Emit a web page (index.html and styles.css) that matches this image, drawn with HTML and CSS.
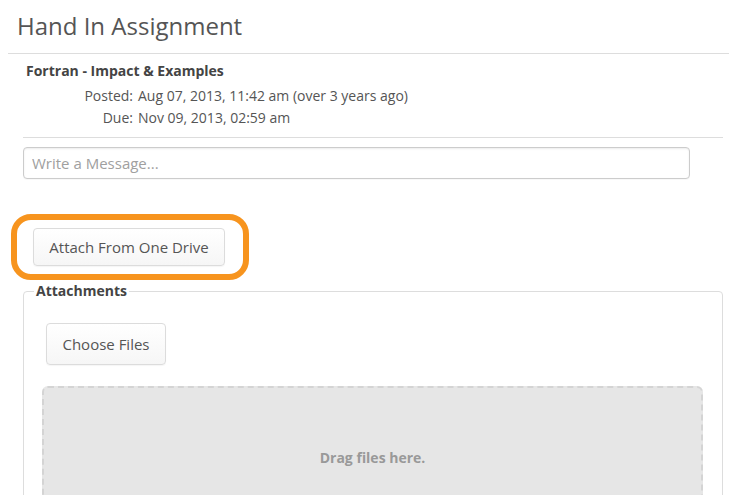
FILE: index.html
```html
<!DOCTYPE html>
<html lang="en">
<head>
<meta charset="utf-8">
<title>Hand In Assignment</title>
<link rel="stylesheet" href="styles.css">
</head>
<body>
<div class="page">
  <h1 class="page-title">Hand In Assignment</h1>
  <div class="info">
    <div class="info-title">Fortran - Impact &amp; Examples</div>
    <div class="info-grid">
      <div class="info-label">Posted:</div>
      <div class="info-value">Aug 07, 2013, 11:42 am (over 3 years ago)</div>
      <div class="info-label">Due:</div>
      <div class="info-value">Nov 09, 2013, 02:59 am</div>
    </div>
  </div>
  <input class="message" type="text" placeholder="Write a Message...">
  <div class="highlight">
    <button class="btn btn-attach" type="button">Attach From One Drive</button>
  </div>
  <fieldset class="attachments">
    <legend class="attachments-legend">Attachments</legend>
    <button class="btn btn-choose" type="button">Choose Files</button>
    <div class="dropzone">Drag files here.</div>
  </fieldset>
</div>
</body>
</html>
```
FILE: styles.css
```css
html, body {
  margin: 0;
  padding: 0;
  background: #ffffff;
  overflow: hidden;
}

body {
  font-family: "Open Sans", "Noto Sans", sans-serif;
  font-size: 14px;
  color: #555555;
}

.page {
  padding-left: 8px;
  display: flex;
  flex-direction: column;
  align-items: flex-start;
}

.page-title {
  align-self: stretch;
  margin: 0;
  padding: 9px 9px 10px;
  font-size: 24px;
  font-weight: 400;
  line-height: 34px;
  color: #555555;
  border-bottom: 1px solid #dddddd;
}

.info {
  align-self: stretch;
  margin: 0 6px 0 15px;
  padding: 6px 0 8px 3px;
  border-bottom: 1px solid #dddddd;
}

.info-title {
  font-weight: 700;
  line-height: 22px;
  color: #444444;
  margin-bottom: 3px;
}

.info-grid {
  display: grid;
  grid-template-columns: 107px auto;
  column-gap: 5px;
  line-height: 22px;
}

.info-label {
  text-align: right;
}

.message {
  margin: 9px 0 0 15px;
  width: 667px;
  height: 32px;
  box-sizing: border-box;
  padding: 0 8px;
  border: 1px solid #cccccc;
  border-radius: 4px;
  box-shadow: inset 0 1px 2px rgba(0, 0, 0, 0.08), 0 1px 1px rgba(0, 0, 0, 0.03);
  font-family: "Open Sans", "Noto Sans", sans-serif;
  font-size: 15px;
  color: #555555;
  outline: none;
}

.message::placeholder {
  color: #a0a0a0;
}

.highlight {
  margin: 35px 0 0 3px;
  padding: 8px 18px 8px 16px;
  border: 6px solid #f7941e;
  border-radius: 20px;
}

.btn {
  display: block;
  box-sizing: border-box;
  font-family: "Open Sans", "Noto Sans", sans-serif;
  color: #555555;
  background: linear-gradient(#ffffff, #f6f6f6);
  border: 1px solid #dcdcdc;
  border-radius: 4px;
  box-shadow: 0 1px 1px rgba(0, 0, 0, 0.04);
  cursor: pointer;
}

.btn-attach {
  width: 192px;
  height: 38px;
  padding: 0;
  font-size: 15px;
}

.attachments {
  align-self: stretch;
  margin: 1px 6px 0 15px;
  padding: 0 19px 0 18px;
  border: 1px solid #dddddd;
  border-radius: 4px;
  min-width: 0;
}

.attachments-legend {
  margin-left: -8px;
  padding: 0 2px;
  font-weight: 700;
  line-height: 20px;
  color: #444444;
}

.btn-choose {
  margin: 22px 0 0 4px;
  width: 120px;
  height: 42px;
  padding: 0;
  font-size: 15px;
}

.dropzone {
  margin-top: 21px;
  height: 142px;
  box-sizing: border-box;
  border: 2px dashed #d4d4d4;
  border-radius: 6px;
  background: #e6e6e6;
  display: flex;
  align-items: center;
  justify-content: center;
  font-size: 14px;
  font-weight: 700;
  color: #999999;
}
```
